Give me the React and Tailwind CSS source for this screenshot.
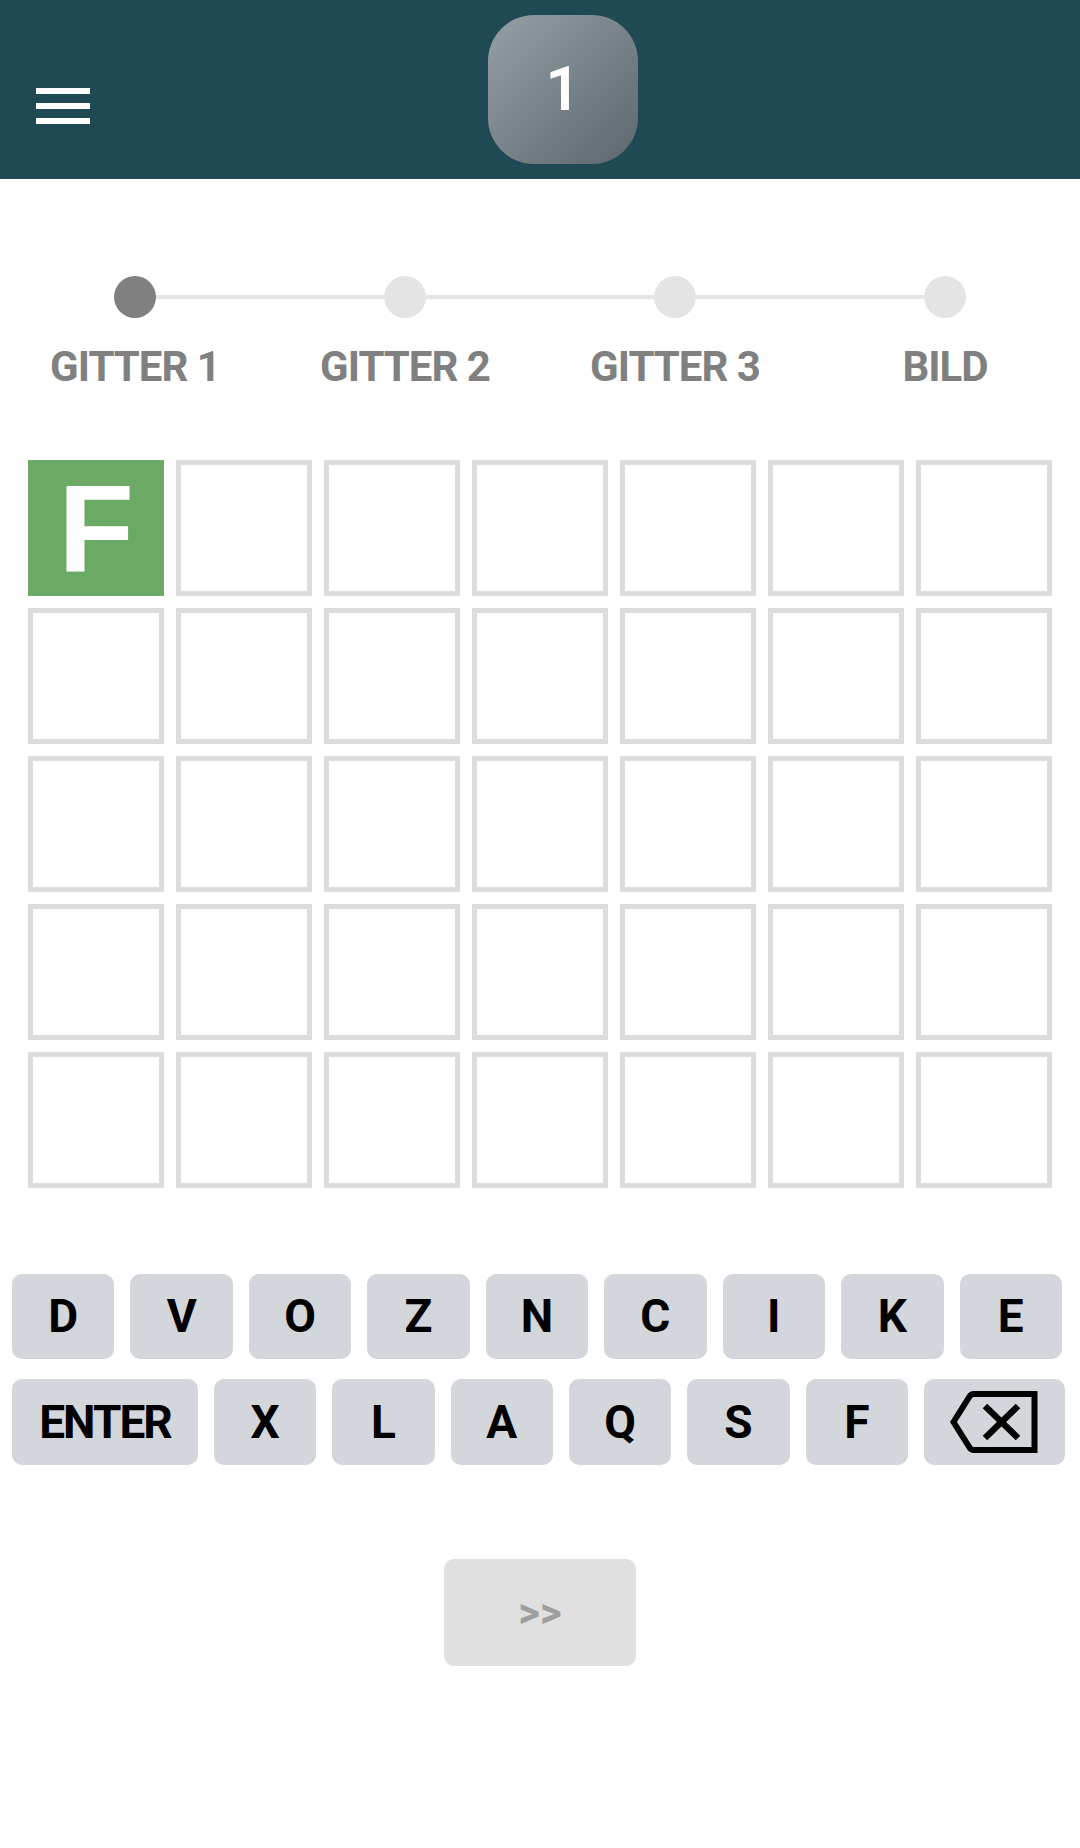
import React from "react";

const steps = ["GITTER 1", "GITTER 2", "GITTER 3", "BILD"];
const row1 = ["D", "V", "O", "Z", "N", "C", "I", "K", "E"];
const row2 = ["X", "L", "A", "Q", "S", "F"];

function Backspace() {
  return (
    <svg width="88" height="66" viewBox="0 0 88 66" fill="none">
      <path
        d="M3.5 33 L19.5 7.5 Q21 5 24 5 L84.5 5 L84.5 61 L24 61 Q21 61 19.5 58.5 Z"
        stroke="#000"
        strokeWidth="6"
        strokeLinejoin="miter"
      />
      <path d="M35 17 L68 49 M68 17 L35 49" stroke="#000" strokeWidth="6.5" />
    </svg>
  );
}

export default function App() {
  return (
    <div className="w-[1080px] h-[1848px] bg-white" style={{ fontFamily: "Roboto, 'Liberation Sans', sans-serif" }}>
      {/* Header */}
      <div className="h-[179px] bg-[#1f4a53] flex items-start pl-[36px]">
        <div className="mt-[88px] w-[54px] flex flex-col gap-[9px]">
          <div className="h-[6px] bg-white" />
          <div className="h-[6px] bg-white" />
          <div className="h-[6px] bg-white" />
        </div>
        <div className="ml-[398px] mt-[15px] w-[150px] h-[149px] rounded-[46px] bg-gradient-to-br from-[#959fa6] to-[#5d676d] flex items-center justify-center">
          <span className="text-white text-[61px] leading-none font-semibold">1</span>
        </div>
      </div>

      {/* Stepper */}
      <div className="grid grid-cols-4 mt-[97px]">
        {steps.map((s, i) => (
          <div key={s} className="flex flex-col items-center">
            <div className="w-full flex items-center">
              <div className={`flex-1 h-[4px] ${i === 0 ? "bg-transparent" : "bg-[#e4e4e4]"}`} />
              <div className={`w-[42px] h-[42px] rounded-full ${i === 0 ? "bg-[#808080]" : "bg-[#e4e4e4]"}`} />
              <div className={`flex-1 h-[4px] ${i === 3 ? "bg-transparent" : "bg-[#e4e4e4]"}`} />
            </div>
            <div className="mt-[24px] text-[42px] leading-[50px] font-bold text-[#808080] tracking-[-1px]">{s}</div>
          </div>
        ))}
      </div>

      {/* Grid */}
      <div className="mt-[68px] px-[28px] grid grid-cols-7 gap-[12px]">
        {Array.from({ length: 35 }).map((_, i) =>
          i === 0 ? (
            <div key={i} className="aspect-square bg-[#6aaa64] flex items-center justify-center">
              <span className="text-white text-[124px] leading-none font-bold" style={{ fontFamily: "'Liberation Sans', Arial, sans-serif" }}>F</span>
            </div>
          ) : (
            <div key={i} className="aspect-square border-[5px] border-[#dcdcdc]" />
          )
        )}
      </div>

      {/* Keyboard */}
      <div className="mt-[86px] pl-[12px] pr-[15px] flex flex-col gap-[20px]">
        <div className="flex gap-[16px] pr-[3px]">
          {row1.map((k) => (
            <div key={k} className="flex-1 h-[85px] rounded-[10px] bg-[#d3d6da] flex items-center justify-center text-[46px] font-bold text-black">
              {k}
            </div>
          ))}
        </div>
        <div className="flex gap-[16px]">
          <div className="w-[186px] h-[86px] rounded-[10px] bg-[#d3d6da] flex items-center justify-center text-[46px] font-bold text-black tracking-[-2px]">
            ENTER
          </div>
          {row2.map((k) => (
            <div key={k} className="flex-1 h-[86px] rounded-[10px] bg-[#d3d6da] flex items-center justify-center text-[46px] font-bold text-black">
              {k}
            </div>
          ))}
          <div className="w-[141px] h-[86px] rounded-[10px] bg-[#d3d6da] flex items-center justify-center">
            <Backspace />
          </div>
        </div>
      </div>

      {/* Next button */}
      <div className="mt-[94px] flex justify-center">
        <div className="w-[192px] h-[107px] rounded-[10px] bg-[#e0e0e0] flex items-center justify-center text-[42px] font-bold text-[#9e9e9e]">
          &gt;&gt;
        </div>
      </div>
    </div>
  );
}
